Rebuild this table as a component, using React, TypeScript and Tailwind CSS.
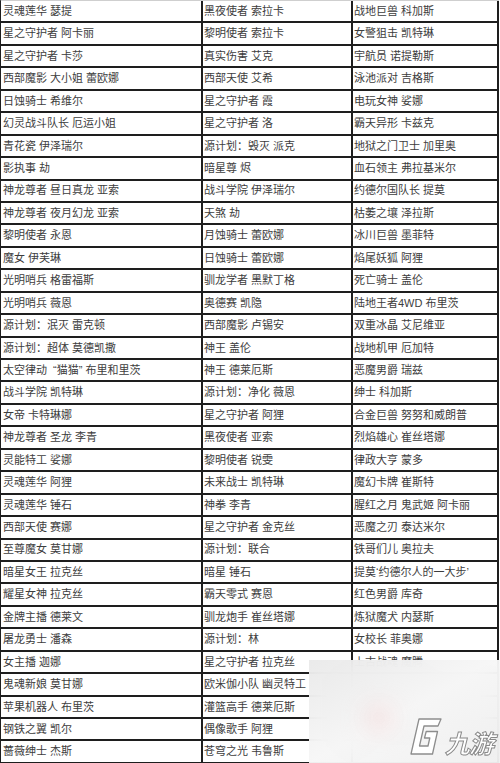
const ROWS: [string, string, string][] = [
  ["灵魂莲华 瑟提", "黑夜使者 索拉卡", "战地巨兽 科加斯"],
  ["星之守护者 阿卡丽", "黎明使者 索拉卡", "女警狙击 凯特琳"],
  ["星之守护者 卡莎", "真实伤害 艾克", "宇航员 诺提勒斯"],
  ["西部魔影 大小姐 蕾欧娜", "西部天使 艾希", "泳池派对 吉格斯"],
  ["日蚀骑士 希维尔", "星之守护者 霞", "电玩女神 娑娜"],
  ["幻灵战斗队长 厄运小姐", "星之守护者 洛", "霸天异形 卡兹克"],
  ["青花瓷 伊泽瑞尔", "源计划：毁灭 派克", "地狱之门卫士 加里奥"],
  ["影执事 劫", "暗星尊 烬", "血石领主 弗拉基米尔"],
  ["神龙尊者 昼日真龙 亚索", "战斗学院 伊泽瑞尔", "约德尔国队长 提莫"],
  ["神龙尊者 夜月幻龙 亚索", "天煞 劫", "枯萎之壤 泽拉斯"],
  ["黎明使者 永恩", "月蚀骑士 蕾欧娜", "冰川巨兽 墨菲特"],
  ["魔女 伊芙琳", "日蚀骑士 蕾欧娜", "焰尾妖狐 阿狸"],
  ["光明哨兵 格雷福斯", "驯龙学者 黑默丁格", "死亡骑士 盖伦"],
  ["光明哨兵 薇恩", "奥德赛 凯隐", "陆地王者4WD 布里茨"],
  ["源计划：泯灭 雷克顿", "西部魔影 卢锡安", "双重冰晶 艾尼维亚"],
  ["源计划：超体 莫德凯撒", "神王 盖伦", "战地机甲 厄加特"],
  ["太空律动  “猫猫” 布里和里茨", "神王 德莱厄斯", "恶魔男爵 瑞兹"],
  ["战斗学院 凯特琳", "源计划：净化 薇恩", "绅士 科加斯"],
  ["女帝 卡特琳娜", "星之守护者 阿狸", "合金巨兽 努努和威朗普"],
  ["神龙尊者 圣龙 李青", "黑夜使者 亚索", "烈焰雄心 崔丝塔娜"],
  ["灵能特工 娑娜", "黎明使者 锐雯", "律政大亨 蒙多"],
  ["灵魂莲华 阿狸", "未来战士 凯特琳", "魔幻卡牌 崔斯特"],
  ["灵魂莲华 锤石", "神拳 李青", "腥红之月 鬼武姬 阿卡丽"],
  ["西部天使 赛娜", "星之守护者 金克丝", "恶魔之刃 泰达米尔"],
  ["至尊魔女 莫甘娜", "源计划：联合", "铁哥们儿 奥拉夫"],
  ["暗星女王 拉克丝", "暗星 锤石", "提莫‘约德尔人的一大步’"],
  ["耀星女神 拉克丝", "霸天零式 赛恩", "红色男爵 库奇"],
  ["金牌主播 德莱文", "驯龙炮手 崔丝塔娜", "炼狱魔犬 内瑟斯"],
  ["屠龙勇士 潘森", "源计划：林", "女校长 菲奥娜"],
  ["女主播 迦娜", "星之守护者 拉克丝", "上古战魂 魔腾"],
  ["鬼魂新娘 莫甘娜", "欧米伽小队 幽灵特工", ""],
  ["苹果机器人 布里茨", "灌篮高手 德莱厄斯", ""],
  ["钢铁之翼 凯尔", "偶像歌手 阿狸", ""],
  ["蔷薇绅士 杰斯", "苍穹之光 韦鲁斯", ""],
];

function Watermark() {
  return (
    <div className="absolute left-[309px] top-[660px] h-[103px] w-[191px] overflow-hidden bg-gradient-to-br from-[#e9e9e9]/95 via-[#f6f6f6]/95 to-[#efefef]/95 backdrop-blur-md">
      <div className="absolute left-[58px] top-[46px] h-[24px] w-[24px] rounded-full bg-[#f3dada] blur-md" />
      <div className="absolute left-[100px] top-[57px] flex items-end">
        <svg width="34" height="40" viewBox="0 0 34 40">
          <path
            d="M10 2 H32 L29 9 H15 L10.5 29 H19 L20.8 21 H15.5 L17.2 14.5 H28.5 L23.5 37 H2 Z"
            fill="#ffffff"
            stroke="#8d8d8d"
            strokeWidth="1.3"
            strokeLinejoin="round"
          />
        </svg>
        <span className="ml-[2px] mb-[2px] text-[25px] font-bold italic leading-none tracking-[-1px] text-white [-webkit-text-stroke:1px_#8a8a8a] [font-family:'Noto_Sans_CJK_SC',sans-serif]">
          九游
        </span>
      </div>
    </div>
  );
}

export default function App() {
  return (
    <div className="relative h-[763px] w-[500px] overflow-hidden bg-white [font-family:'Liberation_Sans','Noto_Sans_CJK_SC',sans-serif]">
      <div className="-mt-[1px] w-[499px] border-l border-t-2 border-[#1e1e1e] border-t-[#cfcfcf]">
        {ROWS.map((r, i) => (
          <div key={i} className="flex h-[22.44px] border-b-2 border-[#1e1e1e]">
            <div className="flex w-[202px] items-center border-r-2 border-[#1e1e1e] pl-[2px] text-[11px] whitespace-pre text-[#3d3d3d]">
              {r[0]}
            </div>
            <div className="flex w-[150px] items-center border-r-2 border-[#1e1e1e] pl-[1px] text-[11px] whitespace-pre text-[#3d3d3d]">
              {r[1]}
            </div>
            <div className="flex w-[146px] items-center border-r-2 border-[#1e1e1e] pl-[1px] text-[11px] whitespace-pre text-[#3d3d3d]">
              {r[2]}
            </div>
          </div>
        ))}
      </div>
      <Watermark />
    </div>
  );
}
